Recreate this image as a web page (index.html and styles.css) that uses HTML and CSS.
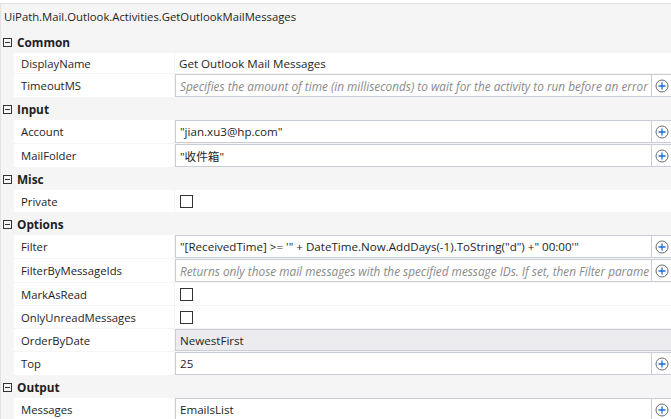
FILE: index.html
```html
<!DOCTYPE html>
<html>
<head>
<meta charset="utf-8">
<link rel="stylesheet" href="styles.css">
</head>
<body>
<div class="panel">
  <div class="title">UiPath.Mail.Outlook.Activities.GetOutlookMailMessages</div>

  <div class="cat"><span class="tog"></span><span class="cat-name">Common</span></div>
  <div class="row plain"><div class="name">DisplayName</div><div class="val"><span class="text">Get Outlook Mail Messages</span></div></div>
  <div class="row box"><div class="name">TimeoutMS</div><div class="val"><div class="tb"><span class="text ph">Specifies the amount of time (in milliseconds) to wait for the activity to run before an error</span><span class="btn"><svg viewBox="0 0 14 14"><circle cx="7" cy="7" r="6" /><path d="M7 3.5v7M3.5 7h7" /></svg></span></div></div></div>

  <div class="cat"><span class="tog"></span><span class="cat-name">Input</span></div>
  <div class="row box"><div class="name">Account</div><div class="val"><div class="tb"><span class="text">"jian.xu3@hp.com"</span><span class="btn"><svg viewBox="0 0 14 14"><circle cx="7" cy="7" r="6" /><path d="M7 3.5v7M3.5 7h7" /></svg></span></div></div></div>
  <div class="row box"><div class="name">MailFolder</div><div class="val"><div class="tb"><span class="text">"收件箱"</span><span class="btn"><svg viewBox="0 0 14 14"><circle cx="7" cy="7" r="6" /><path d="M7 3.5v7M3.5 7h7" /></svg></span></div></div></div>

  <div class="cat"><span class="tog"></span><span class="cat-name">Misc</span></div>
  <div class="row check"><div class="name">Private</div><div class="val"><span class="cb"></span></div></div>

  <div class="cat"><span class="tog"></span><span class="cat-name">Options</span></div>
  <div class="row box"><div class="name">Filter</div><div class="val"><div class="tb"><span class="text">"[ReceivedTime] &gt;= '" + DateTime.Now.AddDays(-1).ToString("d") +" 00:00'"</span><span class="btn"><svg viewBox="0 0 14 14"><circle cx="7" cy="7" r="6" /><path d="M7 3.5v7M3.5 7h7" /></svg></span></div></div></div>
  <div class="row box"><div class="name">FilterByMessageIds</div><div class="val"><div class="tb"><span class="text ph">Returns only those mail messages with the specified message IDs. If set, then Filter parame</span><span class="btn"><svg viewBox="0 0 14 14"><circle cx="7" cy="7" r="6" /><path d="M7 3.5v7M3.5 7h7" /></svg></span></div></div></div>
  <div class="row check"><div class="name">MarkAsRead</div><div class="val"><span class="cb"></span></div></div>
  <div class="row check"><div class="name">OnlyUnreadMessages</div><div class="val"><span class="cb"></span></div></div>
  <div class="row check"><div class="name">OrderByDate</div><div class="val"><div class="combo"><span class="text">NewestFirst</span></div></div></div>
  <div class="row box"><div class="name">Top</div><div class="val"><div class="tb"><span class="text">25</span><span class="btn"><svg viewBox="0 0 14 14"><circle cx="7" cy="7" r="6" /><path d="M7 3.5v7M3.5 7h7" /></svg></span></div></div></div>

  <div class="cat"><span class="tog"></span><span class="cat-name">Output</span></div>
  <div class="row box"><div class="name">Messages</div><div class="val"><div class="tb"><span class="text">EmailsList</span><span class="btn"><svg viewBox="0 0 14 14"><circle cx="7" cy="7" r="6" /><path d="M7 3.5v7M3.5 7h7" /></svg></span></div></div></div>
</div>
</body>
</html>
```
FILE: styles.css
```css
html, body {
  margin: 0;
  padding: 0;
  background: #ffffff;
  overflow: hidden;
}
body {
  font-family: "Open Sans", "Noto Sans CJK SC", sans-serif;
  font-size: 11.6px;
  color: #1e1e1e;
}
.panel {
  margin-top: 3px;
  margin-right: -3px;
  border-top: 1px solid #e2e2e2;
  border-left: 1px solid #e2e2e2;
  background: #f5f5f5;
  height: 420px;
}
.title {
  height: 27px;
  line-height: 26px;
  padding-left: 3px;
  white-space: nowrap;
  font-size: 11.3px;
  color: #1e1e1e;
}
.cat {
  height: 22px;
  display: flex;
  align-items: center;
}
.tog {
  width: 7px;
  height: 7px;
  border: 1px solid #333;
  margin-left: 2px;
  margin-right: 5px;
  position: relative;
  flex: none;
}
.tog::after {
  content: "";
  position: absolute;
  left: 1px;
  right: 1px;
  top: 3px;
  height: 1px;
  background: #333;
}
.cat-name {
  font-weight: 700;
  font-size: 11.8px;
}
.row {
  display: flex;
  margin-left: 13px;
  margin-bottom: 1px;
}
.row.plain { height: 20px; }
.row.box { height: 23px; }
.row.check { height: 22px; }
.name {
  width: 160px;
  flex: none;
  background: #fff;
  margin-right: 1px;
  padding-left: 7px;
  box-sizing: border-box;
  display: flex;
  align-items: center;
  white-space: nowrap;
  overflow: hidden;
  font-size: 11.3px;
}
.val {
  flex: 1;
  min-width: 0;
  background: #fff;
  display: flex;
  align-items: center;
}
.text {
  padding-left: 4px;
  white-space: nowrap;
  overflow: hidden;
}
.tb {
  flex: 1;
  min-width: 0;
  height: 100%;
  box-sizing: border-box;
  border: 1px solid #c9ced6;
  display: flex;
  align-items: center;
}
.tb .text {
  flex: 1;
  min-width: 0;
  padding-left: 4px;
  padding-right: 2px;
}
.ph {
  font-style: italic;
  color: #8a8a8a;
  font-size: 11.8px;
}
.btn {
  width: 20px;
  height: 100%;
  flex: none;
  border-left: 1px solid #c9ced6;
  display: flex;
  align-items: center;
  justify-content: center;
  padding-right: 1px;
}
.btn svg {
  width: 14px;
  height: 14px;
}
.btn circle {
  fill: none;
  stroke: #6a6a6a;
  stroke-width: 1;
}
.btn path {
  stroke: #1a6dd0;
  stroke-width: 1.3;
  fill: none;
}
.cb {
  width: 11px;
  height: 11px;
  border: 1px solid #333;
  margin-left: 5px;
  background: #fff;
}
.combo {
  flex: 1;
  height: 100%;
  box-sizing: border-box;
  border: 1px solid #c9ced6;
  background: #ececef;
  display: flex;
  align-items: center;
}
```
